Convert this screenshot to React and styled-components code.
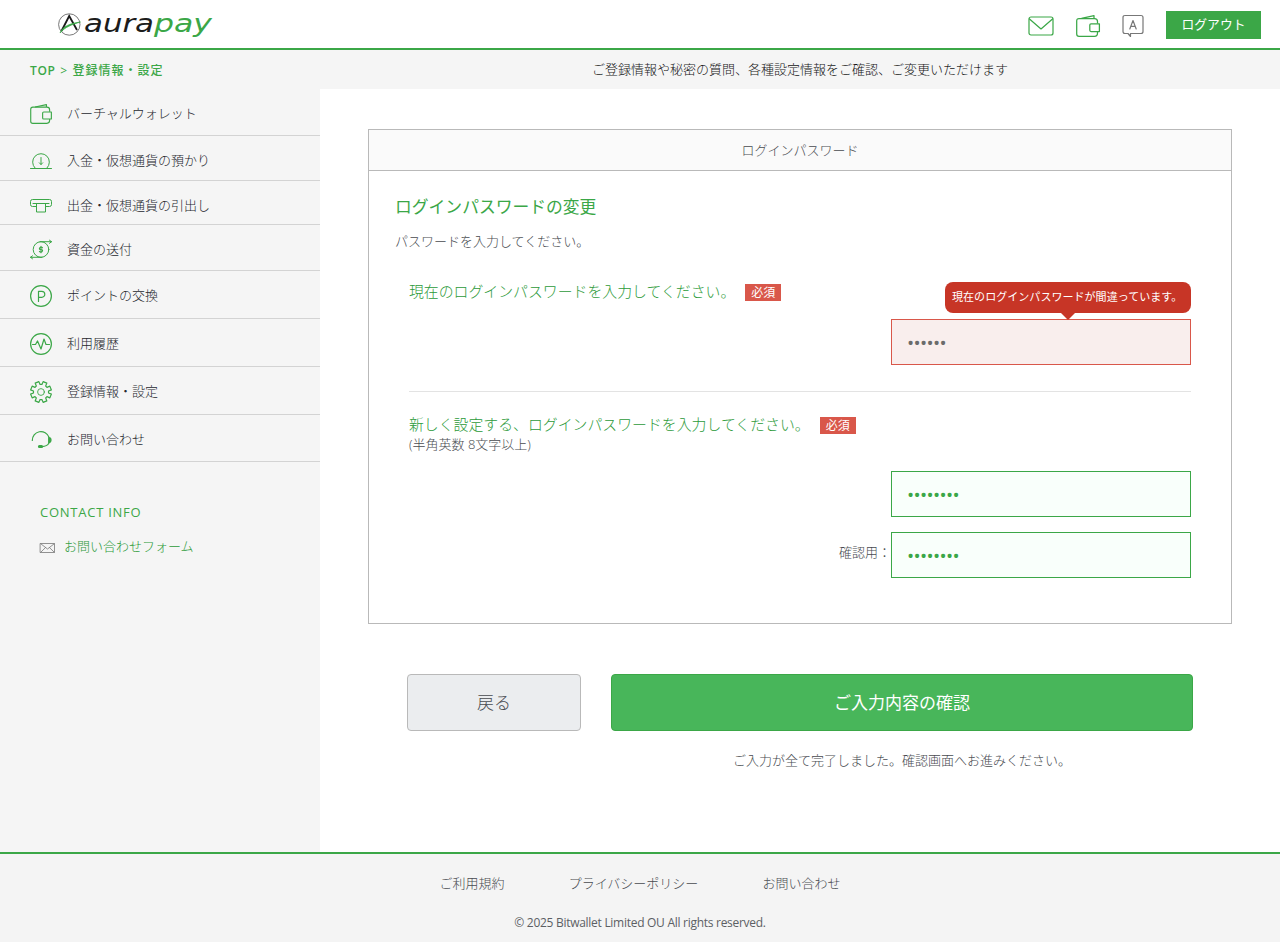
import React from 'react';
import styled, { createGlobalStyle } from 'styled-components';

const GREEN = '#3ba747';
const FONT = '"Open Sans", "Noto Sans CJK JP", sans-serif';

const Global = createGlobalStyle`
  *, *::before, *::after { box-sizing: border-box; }
  body {
    margin: 0;
    background: #fff;
    font-family: ${FONT};
    font-size: 13px;
    font-weight: 300;
    line-height: 20px;
    color: #484b50;
  }
  a { color: inherit; text-decoration: none; }
  svg { display: block; flex: none; overflow: visible; }
`;

const Page = styled.div`
  display: flex;
  flex-direction: column;
  height: 942px;
`;

const Header = styled.header`
  display: flex;
  align-items: center;
  height: 50px;
  padding: 0 19px 0 57px;
  border-bottom: 2px solid ${GREEN};
`;

const Tools = styled.nav`
  display: flex;
  align-items: center;
  gap: 22px;
  margin-left: auto;
`;

const ToolIcons = styled.div`
  display: flex;
  align-items: center;
  gap: 22px;
  padding-top: 4px;
`;

const Logout = styled.button`
  width: 95px;
  height: 28px;
  margin: 1px 0 0;
  padding: 0;
  border: 0;
  background: ${GREEN};
  color: #fff;
  font: 400 12.8px/27px ${FONT};
`;

const SubBar = styled.div`
  display: grid;
  grid-template-columns: 320px 960px;
  height: 39px;
  background: #f5f5f5;
  line-height: 38px;
`;

const Crumbs = styled.div`
  padding: 2px 0 0 30px;
  color: ${GREEN};
  font-size: 12px;
  font-weight: 500;
  letter-spacing: 1px;
  word-spacing: 0.4px;
`;

const CrumbTop = styled.span`
  font-weight: 600;
  letter-spacing: 0.7px;
`;

const Lead = styled.div`
  text-align: center;
  color: #151515;
`;

const Body = styled.div`
  display: flex;
  height: 763px;
`;

const Sidebar = styled.aside`
  width: 320px;
  background: #f5f5f5;
`;

const MenuItem = styled.a`
  display: flex;
  align-items: center;
  gap: 15px;
  height: ${(p) => p.$h}px;
  padding: ${(p) => p.$top}px 0 0 30px;
  border-bottom: 1px solid #d3d3d3;
  color: #25282f;
`;

const MenuText = styled.span`
  padding-bottom: 2px;
`;

const Contact = styled.div`
  padding: 40px 0 0 40px;
  color: ${GREEN};
`;

const ContactTitle = styled.div`
  font-weight: 400;
  letter-spacing: 0.75px;
`;

const ContactLink = styled.a`
  display: flex;
  align-items: center;
  gap: 9px;
  margin-top: 14px;
  color: #2c9a39;
  svg { margin-top: 4px; }
`;

const Main = styled.main`
  width: 960px;
  padding: 40px 48px 0;
`;

const Card = styled.section`
  height: 495px;
  border: 1px solid #b9b9b9;
`;

const CardTitle = styled.div`
  height: 41px;
  border-bottom: 1px solid #b9b9b9;
  background: #fafafa;
  line-height: 40px;
  text-align: center;
`;

const CardBody = styled.div`
  padding: 24px 40px 0 26px;
`;

const Heading = styled.h2`
  margin: 0;
  color: ${GREEN};
  font-size: 16.8px;
  font-weight: 400;
  line-height: 24px;
`;

const Note = styled.p`
  margin: 12px 0 0;
`;

const Fields = styled.div`
  padding-left: 14px;
`;

const Question = styled.div`
  display: flex;
  align-items: center;
  height: 20px;
  margin-top: ${(p) => p.$top}px;
  color: #2c9a39;
  font-size: 14.88px;
`;

const Required = styled.span`
  width: 36px;
  height: 17px;
  margin: 3px 0 0 10px;
  background: #d9574a;
  color: #fff;
  font-size: 12px;
  font-weight: 400;
  line-height: 17px;
  text-align: center;
`;

const InputRow = styled.label`
  position: relative;
  display: flex;
  align-items: center;
  justify-content: flex-end;
  margin-top: ${(p) => p.$top}px;
`;

const RowLabel = styled.span`
  margin: -7px 0 0;
`;

const Input = styled.input`
  width: 300px;
  height: 46px;
  padding: 1px 15px 0;
  border: 1px solid ${(p) => (p.$error ? '#d9574a' : GREEN)};
  border-radius: 0;
  outline: 0;
  background: ${(p) => (p.$error ? '#f9eeed' : '#f9fffb')};
  color: ${(p) => (p.$error ? '#6b6b6b' : GREEN)};
  font: 400 19px ${FONT};
  letter-spacing: -0.65px;
`;

const Tooltip = styled.div`
  position: absolute;
  right: 0;
  bottom: 52px;
  width: 246px;
  height: 31px;
  padding-left: 7px;
  border-radius: 8px;
  background: #c73526;
  color: #fff;
  font-size: 11.05px;
  font-weight: 400;
  line-height: 30px;
  white-space: nowrap;
  &::after {
    content: '';
    position: absolute;
    top: 31px;
    left: 116px;
    border: 7px solid transparent;
    border-top-color: #c73526;
    border-bottom: 0;
  }
`;

const Divider = styled.hr`
  margin: 26px 0 0;
  border: 0;
  border-top: 1px solid #e3e3e3;
`;

const Hint = styled.div`
  line-height: 20px;
`;

const Actions = styled.div`
  display: flex;
  gap: 30px;
  padding: 50px 39px 0;
`;

const Button = styled.button`
  width: ${(p) => (p.$primary ? 582 : 174)}px;
  height: 57px;
  padding: 0;
  border: 1px solid ${(p) => (p.$primary ? GREEN : '#b9b9b9')};
  border-radius: 4px;
  background: ${(p) => (p.$primary ? '#48b65a' : '#ebedef')};
  color: ${(p) => (p.$primary ? '#fff' : '#484b50')};
  font: ${(p) => (p.$primary ? 400 : 300)} 17px/55px ${FONT};
`;

const Status = styled.p`
  width: 582px;
  margin: 19px 0 0 243px;
  text-align: center;
`;

const Footer = styled.footer`
  height: 90px;
  padding-top: 19px;
  border-top: 2px solid ${GREEN};
  background: #f4f4f4;
`;

const FooterLinks = styled.nav`
  display: flex;
  justify-content: center;
  gap: 64px;
`;

const Copyright = styled.div`
  margin-top: 20px;
  color: #5c5f64;
  font-size: 12px;
  font-weight: 400;
  letter-spacing: -0.28px;
  text-align: center;
`;

const Stroke = ({ w = 22, h = 22, color = GREEN, sw = 1.2, children }) => (
  <svg width={w} height={h} viewBox={`0 0 ${w} ${h}`} fill="none" stroke={color}
    strokeWidth={sw} strokeLinecap="round" strokeLinejoin="round">{children}</svg>
);

const Logo = () => (
  <svg width="156" height="30" viewBox="0 0 156 30" fontFamily="DejaVu Sans" fontStyle="italic" fontSize="25.5">
    <circle cx="12.3" cy="15.5" r="10.7" fill="none" stroke="#555" strokeWidth="0.8" />
    <path d="M4.5 22 12.2 7 20 21" fill="none" stroke="#1c1c1c" strokeWidth="1.8" />
    <path d="M3 24C6 17 13 14.5 23.5 13C15 15.5 8 18 3 24Z" fill={GREEN} stroke={GREEN} strokeWidth="0.7" />
    <text x="27" y="23" fill="#1c1c1c" textLength="70" lengthAdjust="spacingAndGlyphs">aura</text>
    <text x="97" y="23" fill={GREEN} textLength="58" lengthAdjust="spacingAndGlyphs">pay</text>
  </svg>
);

const MailIcon = () => (
  <Stroke w={26} h={20}>
    <rect x="1" y="1" width="24" height="18" rx="2" />
    <path d="M1.5 3 13 13 24.5 3" />
  </Stroke>
);

const WalletIcon = ({ w = 24, h = 22 }) => (
  <svg width={w} height={h} viewBox="0 0 24 22" fill="none" stroke={GREEN} strokeWidth="1.25" strokeLinejoin="round">
    <path d="M21.5 8.5V6.5Q21.5 3.5 18.5 3.5H3Q.7 3.5.7 6V19Q.7 21.3 3 21.3H18.5Q21.5 21.3 21.5 18V16.5" />
    <path d="M5.5 3.3 18 .7V3.3" />
    <path d="M23.4 8.8H15Q13.8 8.8 13.8 10V15.3Q13.8 16.5 15 16.5H23.4Z" />
  </svg>
);

const LanguageIcon = () => (
  <Stroke w={22} h={23} color="#777">
    <path d="M6 18.5H3Q1 18.5 1 16.5V2.5Q1 .5 3 .5H19Q21 .5 21 2.5V16.5Q21 18.5 19 18.5H8.5V21.5Z" />
    <path d="M7.8 14 11 5.5 14.2 14M9 11.3H13" />
  </Stroke>
);

const DepositIcon = () => (
  <Stroke sw={1}>
    <path d="M.5 18.5H21.5M5 18A8.4 8.4 0 1 1 17 18" />
    <path d="M11 7.5V14.5M9.3 12.8 11 14.5 12.7 12.8" />
  </Stroke>
);

const WithdrawIcon = () => (
  <Stroke sw={1}>
    <path d="M6 11.5H2.5Q.5 11.5.5 9.5V6.5Q.5 4.5 2.5 4.5H19.5Q21.5 4.5 21.5 6.5V9.5Q21.5 11.5 19.5 11.5H16" />
    <path d="M3 8.5H19M6.5 8.5V17H15.5V8.5" />
  </Stroke>
);

const SendIcon = () => (
  <Stroke sw={1}>
    <circle cx="11" cy="10.5" r="7.8" />
    <path d="M10 2.7H21.5M19.5 1.2 21.5 2.7 19.5 4.3M12 18.3H.5M2.5 16.8.5 18.3 2.5 19.8" />
    <path strokeWidth="1.1" d="M12.5 8.8Q12 8 11 8T9.5 9.3 11 10.6 12.5 11.9 11 13.1 9.4 12.3M11 7.3V13.8" />
  </Stroke>
);

const PointIcon = () => (
  <Stroke><circle cx="11" cy="11" r="10.4" /><path d="M8.5 16.5V6.3H11.8A3 3 0 0 1 11.8 12.3H8.5" /></Stroke>
);

const HistoryIcon = () => (
  <Stroke>
    <circle cx="11" cy="11" r="10.4" />
    <path d="M2.5 11.5H5.5L7.5 8 11 16 14 6 16 11.5H19.5" />
  </Stroke>
);

const gearPath = (() => {
  const pts = [];
  for (let i = 0; i < 8; i += 1) {
    [[-0.27, 7.6], [-0.19, 10.6], [0.19, 10.6], [0.27, 7.6]].forEach(([d, r]) => {
      const a = (i * Math.PI) / 4 + Math.PI / 8 + d;
      pts.push(`${(11 + r * Math.cos(a)).toFixed(2)} ${(11 + r * Math.sin(a)).toFixed(2)}`);
    });
  }
  return `M${pts.join('L')}Z`;
})();

const GearIcon = () => (
  <Stroke><path d={gearPath} /><circle cx="11" cy="11" r="3.4" strokeWidth="0.9" /></Stroke>
);

const HeadsetIcon = () => (
  <Stroke>
    <path d="M2.3 11.5A8.6 8.6 0 0 1 19 8.3M19 14Q17 17.5 12 17.6" />
    <path d="M18.7 8.5Q21 8.6 21 11T18.7 13.7Z" fill={GREEN} />
    <rect x="8.5" y="16.5" width="4" height="2" rx="1" fill={GREEN} />
  </Stroke>
);

const EnvelopeIcon = () => (
  <Stroke w={15} h={10} color="#777" sw={0.8}>
    <rect x=".5" y=".5" width="14" height="9" />
    <path d="M.8.8 7.5 6 14.2.8M.8 9.2 5.5 4.6M14.2 9.2 9.5 4.6" />
  </Stroke>
);

const MENU = [
  ['バーチャルウォレット', () => <WalletIcon w={22} h={20} />, 47, 4],
  ['入金・仮想通貨の預かり', DepositIcon, 45, 6],
  ['出金・仮想通貨の引出し', WithdrawIcon, 44, 7],
  ['資金の送付', SendIcon, 46, 5],
  ['ポイントの交換', PointIcon, 48, 3],
  ['利用履歴', HistoryIcon, 48, 3],
  ['登録情報・設定', GearIcon, 48, 3],
  ['お問い合わせ', HeadsetIcon, 47, 4],
];

export default function App() {
  return (
    <Page>
      <Global />
      <Header>
        <Logo />
        <Tools>
          <ToolIcons>
            <MailIcon />
            <WalletIcon />
            <LanguageIcon />
          </ToolIcons>
          <Logout>ログアウト</Logout>
        </Tools>
      </Header>
      <SubBar>
        <Crumbs><CrumbTop>TOP</CrumbTop> &gt; 登録情報・設定</Crumbs>
        <Lead>ご登録情報や秘密の質問、各種設定情報をご確認、ご変更いただけます</Lead>
      </SubBar>
      <Body>
        <Sidebar>
          {MENU.map(([text, Icon, h, top]) => (
            <MenuItem key={text} href="#" $h={h} $top={top}><Icon /><MenuText>{text}</MenuText></MenuItem>
          ))}
          <Contact>
            <ContactTitle>CONTACT INFO</ContactTitle>
            <ContactLink href="#"><EnvelopeIcon />お問い合わせフォーム</ContactLink>
          </Contact>
        </Sidebar>
        <Main>
          <Card>
            <CardTitle>ログインパスワード</CardTitle>
            <CardBody>
              <Heading>ログインパスワードの変更</Heading>
              <Note>パスワードを入力してください。</Note>
              <Fields>
                <Question $top={30}>
                  現在のログインパスワードを入力してください。<Required>必須</Required>
                </Question>
                <InputRow $top={18}>
                  <Tooltip>現在のログインパスワードが間違っています。</Tooltip>
                  <Input type="password" defaultValue="aaaaaa" $error />
                </InputRow>
                <Divider />
                <Question $top={22}>
                  新しく設定する、ログインパスワードを入力してください。<Required>必須</Required>
                </Question>
                <Hint>(半角英数 8文字以上)</Hint>
                <InputRow $top={17}>
                  <Input type="password" defaultValue="aaaaaaaa" />
                </InputRow>
                <InputRow $top={15}>
                  <RowLabel>確認用：</RowLabel>
                  <Input type="password" defaultValue="aaaaaaaa" />
                </InputRow>
              </Fields>
            </CardBody>
          </Card>
          <Actions>
            <Button>戻る</Button>
            <Button $primary>ご入力内容の確認</Button>
          </Actions>
          <Status>ご入力が全て完了しました。確認画面へお進みください。</Status>
        </Main>
      </Body>
      <Footer>
        <FooterLinks>
          <a href="#">ご利用規約</a>
          <a href="#">プライバシーポリシー</a>
          <a href="#">お問い合わせ</a>
        </FooterLinks>
        <Copyright>© 2025 Bitwallet Limited OU All rights reserved.</Copyright>
      </Footer>
    </Page>
  );
}
